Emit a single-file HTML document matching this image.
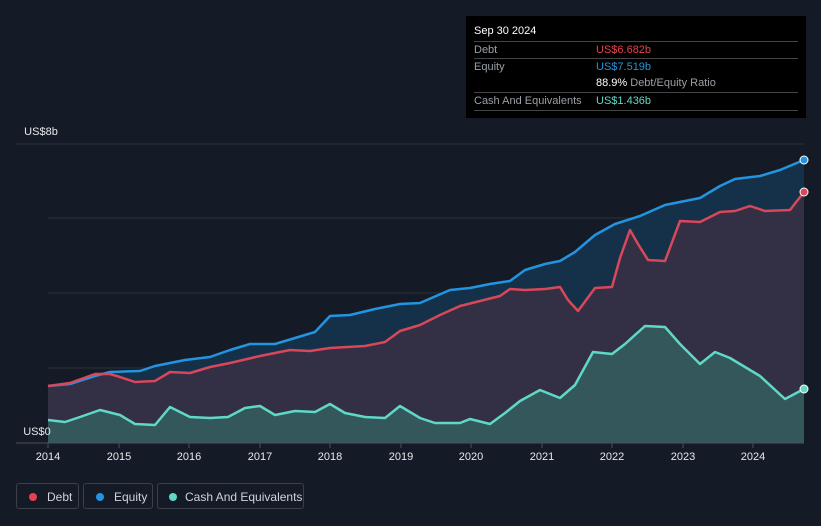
<!DOCTYPE html>
<html><head><style>
body{margin:0;background:#151b26;width:821px;height:526px;overflow:hidden;font-family:"Liberation Sans",sans-serif;}
.tip{position:absolute;left:466px;top:16px;width:340px;height:102px;background:#000;color:#fff;font-size:11px;}
.tip .r{position:absolute;left:8px;right:8px;border-top:1px solid #444;height:16px;}
.tip span{position:absolute;top:2px;white-space:nowrap}
.lab{color:#9aa0a6}
.leg{position:absolute;top:483px;height:26px;border:1px solid #3a3f4a;border-radius:3px;color:#d0d3d8;font-size:12px;line-height:26px;box-sizing:border-box;white-space:nowrap;overflow:hidden}
.dot{display:inline-block;width:8px;height:8px;border-radius:50%;margin:0 10px 0 12px;vertical-align:0}
</style></head><body>
<svg width="821" height="526" style="position:absolute;left:0;top:0">
<g stroke="#2a303b" stroke-width="1">
<line x1="16" y1="144" x2="804" y2="144"/><line x1="48" y1="218" x2="804" y2="218"/><line x1="48" y1="293" x2="804" y2="293"/><line x1="48" y1="368" x2="804" y2="368"/>
</g>
<polygon fill="#153049" stroke="none" points="48,443 48,386 70,384 95,376 110,372 140,371 155,366 185,360 210,357 230,350 250,344 275,344 295,338 315,332 330,316 350,315 375,309 400,304 420,303 450,290 470,288 490,284 510,281 525,270 545,264 560,261 575,252 595,235 615,224 640,216 665,205 680,202 700,198 720,186 735,179 760,176 780,170 804,160 804,443"/>
<polygon fill="#332f44" points="48,443 48,386 70,383 95,374 110,374 120,377 135,382 155,381 170,372 190,373 210,367 230,363 260,356 290,350 310,351 330,348 365,346 385,342 400,331 420,325 440,315 460,306 480,301 500,296 510,289 525,290 545,289 560,287 568,300 578,311 595,288 612,287 620,258 630,230 638,244 648,260 665,261 680,221 700,222 720,212 735,211 750,206 765,211 790,210 804,192 804,443"/>
<polygon fill="#34575c" points="48,443 48,420 65,422 80,417 100,410 120,415 135,424 155,425 170,407 190,417 210,418 228,417 245,408 260,406 275,415 295,411 315,412 330,404 345,413 365,417 385,418 400,406 420,418 435,423 460,423 470,419 490,424 505,413 520,401 540,390 560,398 575,385 593,352 612,354 625,344 645,326 665,327 680,344 700,364 715,352 730,358 760,376 785,399 804,389 804,443"/>
<g fill="none" stroke-width="2.5" stroke-linejoin="round">
<polyline stroke="#2394df" points="48,386 70,384 95,376 110,372 140,371 155,366 185,360 210,357 230,350 250,344 275,344 295,338 315,332 330,316 350,315 375,309 400,304 420,303 450,290 470,288 490,284 510,281 525,270 545,264 560,261 575,252 595,235 615,224 640,216 665,205 680,202 700,198 720,186 735,179 760,176 780,170 804,160"/>
<polyline stroke="#d9475a" points="48,386 70,383 95,374 110,374 120,377 135,382 155,381 170,372 190,373 210,367 230,363 260,356 290,350 310,351 330,348 365,346 385,342 400,331 420,325 440,315 460,306 480,301 500,296 510,289 525,290 545,289 560,287 568,300 578,311 595,288 612,287 620,258 630,230 638,244 648,260 665,261 680,221 700,222 720,212 735,211 750,206 765,211 790,210 804,192"/>
<polyline stroke="#5fd9c6" points="48,420 65,422 80,417 100,410 120,415 135,424 155,425 170,407 190,417 210,418 228,417 245,408 260,406 275,415 295,411 315,412 330,404 345,413 365,417 385,418 400,406 420,418 435,423 460,423 470,419 490,424 505,413 520,401 540,390 560,398 575,385 593,352 612,354 625,344 645,326 665,327 680,344 700,364 715,352 730,358 760,376 785,399 804,389"/>
</g>
<circle cx="804" cy="160" r="4" fill="#2394df" stroke="#fff" stroke-width="1"/>
<circle cx="804" cy="192" r="4" fill="#d9475a" stroke="#fff" stroke-width="1"/>
<circle cx="804" cy="389" r="4" fill="#5fd9c6" stroke="#fff" stroke-width="1"/>
<line x1="16" y1="443" x2="804" y2="443" stroke="#4a4f5a"/>
<g stroke="#4a4f5a"><line x1="48" y1="443" x2="48" y2="448"/><line x1="119" y1="443" x2="119" y2="448"/><line x1="189" y1="443" x2="189" y2="448"/><line x1="260" y1="443" x2="260" y2="448"/><line x1="330" y1="443" x2="330" y2="448"/><line x1="401" y1="443" x2="401" y2="448"/><line x1="471" y1="443" x2="471" y2="448"/><line x1="542" y1="443" x2="542" y2="448"/><line x1="612" y1="443" x2="612" y2="448"/><line x1="683" y1="443" x2="683" y2="448"/><line x1="753" y1="443" x2="753" y2="448"/></g>
<g fill="#e6e8eb" font-size="11" font-family="Liberation Sans,sans-serif" text-anchor="middle">
<text x="48" y="460">2014</text><text x="119" y="460">2015</text><text x="189" y="460">2016</text><text x="260" y="460">2017</text><text x="330" y="460">2018</text><text x="401" y="460">2019</text><text x="471" y="460">2020</text><text x="542" y="460">2021</text><text x="612" y="460">2022</text><text x="683" y="460">2023</text><text x="753" y="460">2024</text>
<text x="41" y="135">US$8b</text><text x="37" y="435">US$0</text>
</g>
</svg>
<div class="tip">
<span style="left:8px;top:9px;font-size:11px">Sep 30 2024</span>
<div class="r" style="top:25px"><span class="lab">Debt</span><span style="left:122px;color:#e5414e">US$6.682b</span></div>
<div class="r" style="top:42px"><span class="lab">Equity</span><span style="left:122px;color:#2394df">US$7.519b</span></div>
<div style="position:absolute;left:130px;top:61px">88.9% <span class="lab" style="position:static">Debt/Equity Ratio</span></div>
<div class="r" style="top:76px"><span class="lab">Cash And Equivalents</span><span style="left:122px;color:#5fd9c6">US$1.436b</span></div>
<div class="r" style="top:94px;height:0"></div>
</div>
<div class="leg" style="left:16px;width:63px"><span class="dot" style="background:#e5414e"></span>Debt</div>
<div class="leg" style="left:83px;width:70px"><span class="dot" style="background:#2394df"></span>Equity</div>
<div class="leg" style="left:157px;width:147px"><span class="dot" style="background:#5fd9c6;margin:0 8px 0 11px"></span>Cash And Equivalents</div>
</body></html>
